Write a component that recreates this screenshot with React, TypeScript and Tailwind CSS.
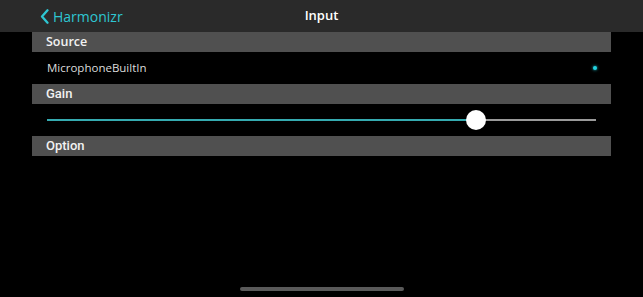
import React from 'react';

const SectionHeader = ({ title, font }: { title: string; font: string }) => (
  <div className={`h-[20px] bg-[#505050] pl-[14px] flex items-center text-[#f2f2f2] ${font}`}>
    {title}
  </div>
);

export default function App() {
  const gain = 78.1;

  return (
    <div className="w-[643px] h-[297px] bg-black flex flex-col overflow-hidden font-['Open_Sans',sans-serif]">
      {/* nav bar */}
      <div className="h-[32px] bg-[#2a2a2a] relative flex items-center shrink-0">
        <div className="flex items-center pl-[40px] text-[#2ec6d2] text-[14px]">
          <svg width="9" height="15" viewBox="0 0 9 15" className="mr-[4px]">
            <path d="M7.5 1.3 L2 7.5 L7.5 13.7" fill="none" stroke="#2ec6d2" strokeWidth="2.3" strokeLinecap="round" strokeLinejoin="round" />
          </svg>
          <span className="font-medium">Harmonizr</span>
        </div>
        <div className="absolute left-0 right-0 text-center text-[13px] font-semibold text-white pointer-events-none">Input</div>
      </div>

      <div className="mx-[32px] flex flex-col">
        <SectionHeader title="Source" font="text-[12.5px] font-semibold" />
        <div className="h-[32px] flex items-center justify-between pl-[15px] pr-[15px]">
          <span className="text-[11.5px] text-[#dcdcdc]">MicrophoneBuiltIn</span>
          <span className="w-[4px] h-[4px] rounded-full bg-[#22d3e0] shadow-[0_0_3px_#22d3e0] mr-[-1px]" />
        </div>

        <SectionHeader title="Gain" font="text-[13px] font-['Roboto',sans-serif] font-medium" />
        <div className="h-[32px] flex items-center px-[15px]">
          <div className="relative w-full h-[2px] bg-[#9a9a9a]">
            <div className="absolute left-0 top-[-0.5px] h-[2.5px] bg-[#35aab0]" style={{ width: `${gain}%` }} />
            <div
              className="absolute top-1/2 w-[20px] h-[20px] -translate-x-1/2 -translate-y-1/2 rounded-full bg-white"
              style={{ left: `${gain}%` }}
            />
          </div>
        </div>

        <SectionHeader title="Option" font="text-[13px] font-['Roboto',sans-serif] font-medium" />
      </div>

      <div className="mt-auto mb-[6px] flex justify-center">
        <div className="w-[164px] h-[4px] rounded-full bg-[#5a5a5a] ml-[1px]" />
      </div>
    </div>
  );
}
